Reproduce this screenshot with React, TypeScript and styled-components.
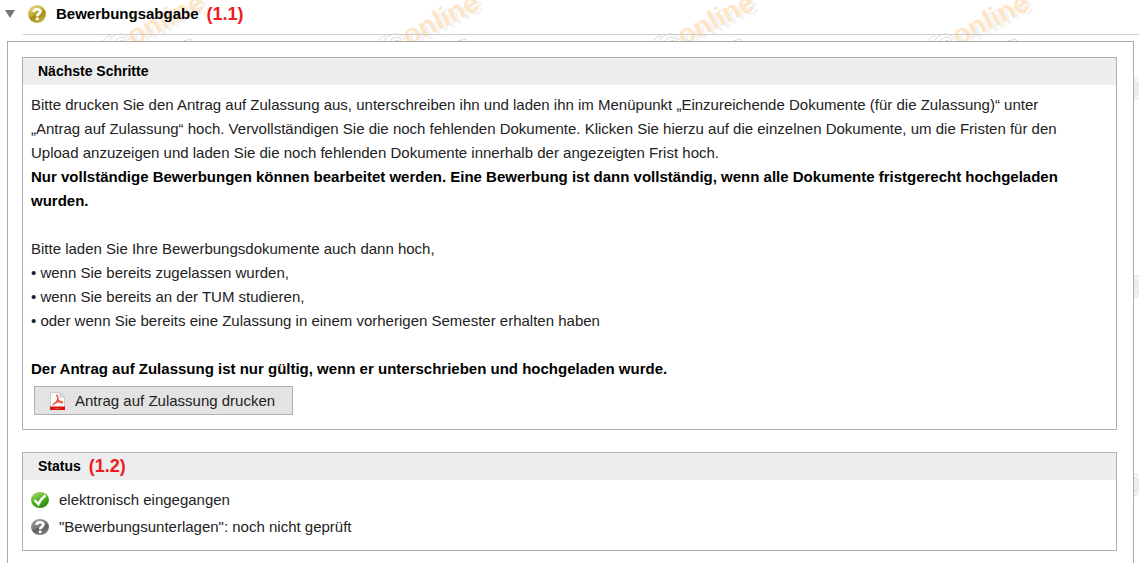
import React from "react";
import styled, { createGlobalStyle } from "styled-components";

const GlobalStyle = createGlobalStyle`
  body {
    margin: 0;
    background: #fff;
    color: #222;
    font: 15px/24px "Liberation Sans", Arial, sans-serif;
  }
`;

const Page = styled.main`
  position: relative;
  padding: 0 5px 0 7px;
`;

const Backdrop = styled.svg`
  position: absolute;
  inset: 0;
  width: 100%;
  height: 100%;
  z-index: -1;
`;

const TitleBar = styled.header`
  display: flex;
  align-items: center;
  height: 28px;
  margin: 0 -5px 0 -2px;
`;

const Toggle = styled.button`
  display: flex;
  align-items: center;
  padding: 0;
  border: 0;
  background: none;
  color: #000;
  font: bold 15px/24px "Liberation Sans", Arial, sans-serif;

  svg:nth-of-type(2) {
    margin: 0 10px 0 13px;
  }
`;

const Marker = styled.span`
  margin-left: 8px;
  color: #ed1c24;
  font: bold 18px/20px "Liberation Sans", Arial, sans-serif;
`;

const Divider = styled.hr`
  height: 1px;
  margin: 6px -5px 6px 16px;
  border: 0;
  background: #ccc;
`;

const Panel = styled.section`
  display: flex;
  flex-direction: column;
  gap: 22px;
  padding: 15px 16px 12px 14px;
  border: solid #aaa;
  border-width: 1px 1px 0;
  background: #fff;
`;

const Card = styled.section`
  border: 1px solid #b0b0b0;
  background: #fff;
`;

const CardHeader = styled.div`
  display: flex;
  align-items: center;
  height: 25px;
  padding: 0 0 2px 15px;
  background: #ededed;
`;

const CardTitle = styled.h2`
  margin: 0;
  color: #000;
  font-size: 14px;
  line-height: 24px;
`;

const CardBody = styled.div`
  padding: 8px 8px 14px;
`;

const Paragraph = styled.p`
  margin: 0 0 24px;
  strong {
    color: #000;
  }
`;

const Closing = styled(Paragraph)`
  margin-bottom: 5px;
`;

const PrintButton = styled.button`
  display: flex;
  align-items: center;
  gap: 8px;
  height: 29px;
  margin-left: 3px;
  padding: 0 17px 0 14px;
  border: 1px solid #b0b0b0;
  background: #e3e3e3;
  color: #222;
  font: inherit;
`;

const StatusList = styled.ul`
  margin: 0;
  padding: 6px 8px 10px;
  list-style: none;
`;

const StatusItem = styled.li`
  display: flex;
  align-items: center;
  gap: 10px;
  height: 27px;
`;

function Watermark() {
  return (
    <Backdrop aria-hidden="true">
      <defs>
        <pattern id="wm" width="275" height="198" patternUnits="userSpaceOnUse">
          <g
            transform="translate(133 46) rotate(-27)"
            fontFamily="Liberation Sans, Arial, sans-serif"
            fontWeight="bold"
            fontSize="28"
          >
            <text x="3" y="4" fill="#f4f4f4">online</text>
            <text x="0" y="0" fill="#fee5c6">online</text>
          </g>
          <g fill="none" stroke="#d8d8d8">
            <path d="M102 42q5-7 9-6M108 42q6-9 14-8q6 1 7 6M114 42q5-7 11-4l2 3M119 42q3-3 5-1M183 41l8-2 1 3" />
          </g>
        </pattern>
        <pattern id="wm-edge" width="275" height="198" x="1131" y="77" patternUnits="userSpaceOnUse">
          <g fill="#eee" stroke="#dedede">
            <path d="M0 1q13-2 13 9t-13 14" fill="#f8f8f8" />
            <ellipse cx="4" cy="12" rx="5" ry="7" />
          </g>
        </pattern>
      </defs>
      <rect width="100%" height="42" fill="url(#wm)" />
      <rect y="42" width="100%" height="100%" fill="url(#wm-edge)" />
    </Backdrop>
  );
}

function QuestionIcon({ tone }: { tone: "gold" | "gray" }) {
  const gold = tone === "gold";
  const id = `ball-${tone}`;
  return (
    <svg width="18" height="18" viewBox="0 0 18 18" aria-hidden="true">
      <defs>
        <linearGradient id={id} x1="0.2" y1="0" x2="0.7" y2="1">
          <stop offset="0" stopColor={gold ? "#e9df8b" : "#a2a2a2"} />
          <stop offset="0.5" stopColor={gold ? "#bda52b" : "#777"} />
          <stop offset="0.55" stopColor={gold ? "#a48b13" : "#5c5c5c"} />
          <stop offset="1" stopColor={gold ? "#c9b544" : "#808080"} />
        </linearGradient>
      </defs>
      <ellipse cx="9" cy="9" rx="9" ry={gold ? 9 : 8} fill={`url(#${id})`} />
      <path d="M5.6 7C5.8 3.5 12.4 3.3 12.4 6.6c0 2.4-3.2 2.2-3.2 4.6" fill="none" stroke="#fff" strokeWidth="2.7" />
      <circle cx="9.2" cy="13.8" r="1.5" fill="#fff" />
    </svg>
  );
}

function CheckIcon() {
  return (
    <svg width="18" height="18" viewBox="0 0 18 18" aria-hidden="true">
      <defs>
        <linearGradient id="ball-green" x1="0.2" y1="0" x2="0.7" y2="1">
          <stop offset="0" stopColor="#a4dc68" />
          <stop offset="0.5" stopColor="#4fae22" />
          <stop offset="1" stopColor="#2b8d0c" />
        </linearGradient>
      </defs>
      <ellipse cx="9" cy="9" rx="9" ry="8" fill="url(#ball-green)" />
      <path d="M3.6 9l3.8 4.2c1.6-3.6 4-6.6 7.2-9" fill="none" stroke="#fff" strokeWidth="2.5" />
    </svg>
  );
}

function PdfIcon() {
  return (
    <svg width="18" height="18" viewBox="0 0 18 18" aria-hidden="true">
      <path d="M1.5.5h9.5l4.5 4.5v13h-14z" fill="#fafafa" stroke="#ccc" />
      <path d="M11 .5v4.5h4.5z" fill="#ddd" stroke="#c8c8c8" />
      <path d="M7.6 2.6c2.6 4 1.8 6.4-3.8 10.4M8.6 6.4c.8 2.6 2.4 4 5.4 4.6M5.6 11.2c2.4-1.6 5-2 8-1.4" fill="none" stroke="#f0523f" strokeWidth="1.5" />
      <path d="M1 14.5h15v3.5H1z" fill="#dc1414" />
      <path d="M6 16.5h5" stroke="#e8483c" />
    </svg>
  );
}

export default function App() {
  return (
    <>
      <GlobalStyle />
      <Page>
        <Watermark />
        <TitleBar>
          <Toggle type="button" aria-expanded="true">
            <svg width="10" height="8" viewBox="0 0 10 8" aria-hidden="true">
              <path d="M0 0h10L5 8z" fill="#777" />
            </svg>
            <QuestionIcon tone="gold" />
            Bewerbungsabgabe
          </Toggle>
          <Marker>(1.1)</Marker>
        </TitleBar>
        <Divider />
        <Panel>
          <Card>
            <CardHeader>
              <CardTitle>Nächste Schritte</CardTitle>
            </CardHeader>
            <CardBody>
              <Paragraph>
                Bitte drucken Sie den Antrag auf Zulassung aus, unterschreiben ihn und laden ihn im Menüpunkt
                „Einzureichende Dokumente (für die Zulassung)“ unter
                <br />
                „Antrag auf Zulassung“ hoch. Vervollständigen Sie die noch fehlenden Dokumente. Klicken Sie hierzu auf
                die einzelnen Dokumente, um die Fristen für den
                <br />
                Upload anzuzeigen und laden Sie die noch fehlenden Dokumente innerhalb der angezeigten Frist hoch.
                <br />
                <strong>
                  Nur vollständige Bewerbungen können bearbeitet werden. Eine Bewerbung ist dann vollständig, wenn
                  alle Dokumente fristgerecht hochgeladen
                  <br />
                  wurden.
                </strong>
              </Paragraph>
              <Paragraph>
                Bitte laden Sie Ihre Bewerbungsdokumente auch dann hoch,
                <br />
                • wenn Sie bereits zugelassen wurden,
                <br />
                • wenn Sie bereits an der TUM studieren,
                <br />
                • oder wenn Sie bereits eine Zulassung in einem vorherigen Semester erhalten haben
              </Paragraph>
              <Closing>
                <strong>Der Antrag auf Zulassung ist nur gültig, wenn er unterschrieben und hochgeladen wurde.</strong>
              </Closing>
              <PrintButton type="button">
                <PdfIcon />
                Antrag auf Zulassung drucken
              </PrintButton>
            </CardBody>
          </Card>
          <Card>
            <CardHeader>
              <CardTitle>Status</CardTitle>
              <Marker>(1.2)</Marker>
            </CardHeader>
            <StatusList>
              <StatusItem>
                <CheckIcon />
                elektronisch eingegangen
              </StatusItem>
              <StatusItem>
                <QuestionIcon tone="gray" />
                "Bewerbungsunterlagen": noch nicht geprüft
              </StatusItem>
            </StatusList>
          </Card>
        </Panel>
      </Page>
    </>
  );
}
